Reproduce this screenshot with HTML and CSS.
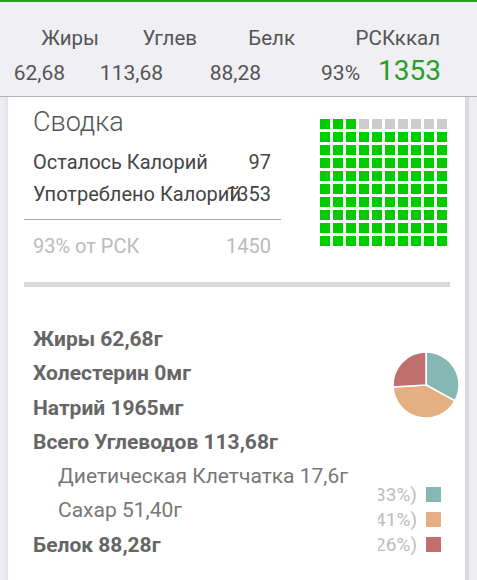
FILE: index.html
```html
<!DOCTYPE html>
<html lang="ru">
<head>
<meta charset="utf-8">
<title>Сводка</title>
<link rel="stylesheet" href="styles.css">
</head>
<body>
<header class="totals">
  <div class="totals-labels">
    <span>Жиры</span><span>Углев</span><span>Белк</span><span>РСКккал</span>
  </div>
  <div class="totals-values">
    <span>62,68</span><span>113,68</span><span>88,28</span>
    <span class="totals-kcal"><span class="pct">93%</span><span class="big">1353</span></span>
  </div>
</header>

<main class="card">
  <section class="summary">
    <div class="summary-text">
      <h1 class="summary-title">Сводка</h1>
      <div class="row"><span>Осталось Калорий</span><span class="num">97</span></div>
      <div class="row"><span>Употреблено Калорий</span><span class="num">1353</span></div>
      <div class="rule"></div>
      <div class="row muted"><span>93% от РСК</span><span class="num">1450</span></div>
    </div>
    <div class="waffle" id="waffle"></div>
  </section>

  <div class="bar"></div>

  <section class="nutrients">
    <ul class="nutrient-list">
      <li class="strong">Жиры 62,68г</li>
      <li class="strong">Холестерин 0мг</li>
      <li class="strong">Натрий 1965мг</li>
      <li class="strong">Всего Углеводов 113,68г</li>
      <li class="sub">Диетическая Клетчатка 17,6г</li>
      <li class="sub">Сахар 51,40г</li>
      <li class="strong">Белок 88,28г</li>
    </ul>
    <div class="chart">
      <svg class="pie" width="70" height="70" viewBox="0 0 70 70">
        <path d="M35 35 L35 2 A33 33 0 0 1 63.92 50.90 Z" fill="#85b8b5" stroke="#fff" stroke-width="1.5"/>
        <path d="M35 35 L63.92 50.90 A33 33 0 0 1 2.07 37.07 Z" fill="#e4b083" stroke="#fff" stroke-width="1.5"/>
        <path d="M35 35 L2.07 37.07 A33 33 0 0 1 35 2 Z" fill="#c16f6e" stroke="#fff" stroke-width="1.5"/>
      </svg>
      <div class="legend">
        <div class="legend-row"><div class="legend-text"><span>Жиры (33%)</span></div><i class="sw teal"></i></div>
        <div class="legend-row"><div class="legend-text"><span>Углеводы (41%)</span></div><i class="sw orange"></i></div>
        <div class="legend-row"><div class="legend-text"><span>Белок (26%)</span></div><i class="sw red"></i></div>
      </div>
    </div>
  </section>
</main>
<script>
  var w = document.getElementById('waffle');
  for (var i = 0; i < 100; i++) {
    var c = document.createElement('div');
    c.className = i >= 3 && i < 10 ? 'cell off' : 'cell';
    w.appendChild(c);
  }
</script>
</body>
</html>
```

FILE: styles.css
```css
* { box-sizing: border-box; }
html, body { margin: 0; padding: 0; }
body {
  width: 477px;
  height: 580px;
  overflow: hidden;
  background: #ededf2;
  font-family: Roboto, "Noto Sans", "Liberation Sans", sans-serif;
  color: #555;
}

.totals {
  border-top: 2px solid #2a9f2a;
  border-bottom: 1px solid #b3b3b6;
  background: #efeff4;
  height: 97px;
  padding-top: 24px;
}
.totals-labels, .totals-values {
  display: grid;
  font-size: 21px;
  color: #555;
}
.totals-labels {
  grid-template-columns: 99px 98px 98px 1fr;
  line-height: 24px;
  padding-right: 37px;
  text-align: right;
  font-size: 20.5px;
}
.totals-values {
  grid-template-columns: 65px 98px 98px 1fr;
  line-height: 36px;
  padding-right: 36px;
  margin-top: 3px;
  text-align: right;
  align-items: baseline;
}
.totals-kcal {
  display: flex;
  justify-content: flex-end;
  align-items: baseline;
  gap: 18px;
}
.totals-kcal .big {
  font-size: 28px;
  color: #2a9f2a;
}

.card {
  margin-left: 8px;
  width: 457px;
  height: 483px;
  background: #fff;
  box-shadow: -3px 0 0 #e4e4e9, 4px 0 0 #dcdce0;
}

.summary {
  display: flex;
  padding: 9px 0 0 16px;
}
.summary-text {
  width: 257px;
}
.summary-title {
  margin: 0 0 8px;
  padding-left: 9px;
  font-size: 27px;
  font-weight: 300;
  line-height: 32px;
  color: #555;
}
.row {
  display: flex;
  justify-content: space-between;
  padding: 0 10px 0 9px;
  font-size: 20px;
  line-height: 32px;
  color: #444;
}
.row .num { margin-left: -60px; }
.row.muted { color: #bbb; }
.rule {
  height: 1px;
  background: #a9a9a9;
  margin: 9px 0 10px;
}
.waffle {
  margin: 13px 0 0 39px;
  display: grid;
  grid-template-columns: repeat(10, 10px);
  grid-auto-rows: 10px;
  gap: 3px;
}
.cell { background: #00cc00; }
.cell.off { background: #cccccc; }

.bar {
  margin: 20px 0 0 16px;
  width: 426px;
  height: 5px;
  background: #d9d9d9;
}

.nutrients {
  display: flex;
  padding: 35px 4px 0 25px;
}
.nutrient-list {
  flex: 1;
  list-style: none;
  margin: 0;
  padding: 0;
  font-size: 21px;
  line-height: 34.3px;
  white-space: nowrap;
}
.nutrient-list .strong { font-weight: 700; color: #666; }
.nutrient-list .sub { padding-left: 25px; color: #777; }

.chart {
  width: 83px;
  flex: none;
  display: flex;
  flex-direction: column;
  align-items: flex-end;
}
.pie {
  display: block;
  margin-top: 28px;
}
.legend {
  margin-top: 62px;
  width: 83px;
  padding-right: 20px;
}
.legend-row {
  display: flex;
  align-items: center;
  height: 25px;
}
.legend-text {
  width: 39px;
  margin-left: auto;
  margin-right: 9px;
  overflow: hidden;
  display: flex;
  justify-content: flex-end;
  white-space: nowrap;
  font-size: 19px;
  line-height: 25px;
  color: #bdbdbd;
}
.sw {
  display: block;
  width: 15px;
  height: 15px;
}
.sw.teal { background: #85b8b5; }
.sw.orange { background: #e4b083; }
.sw.red { background: #c16f6e; }
```
